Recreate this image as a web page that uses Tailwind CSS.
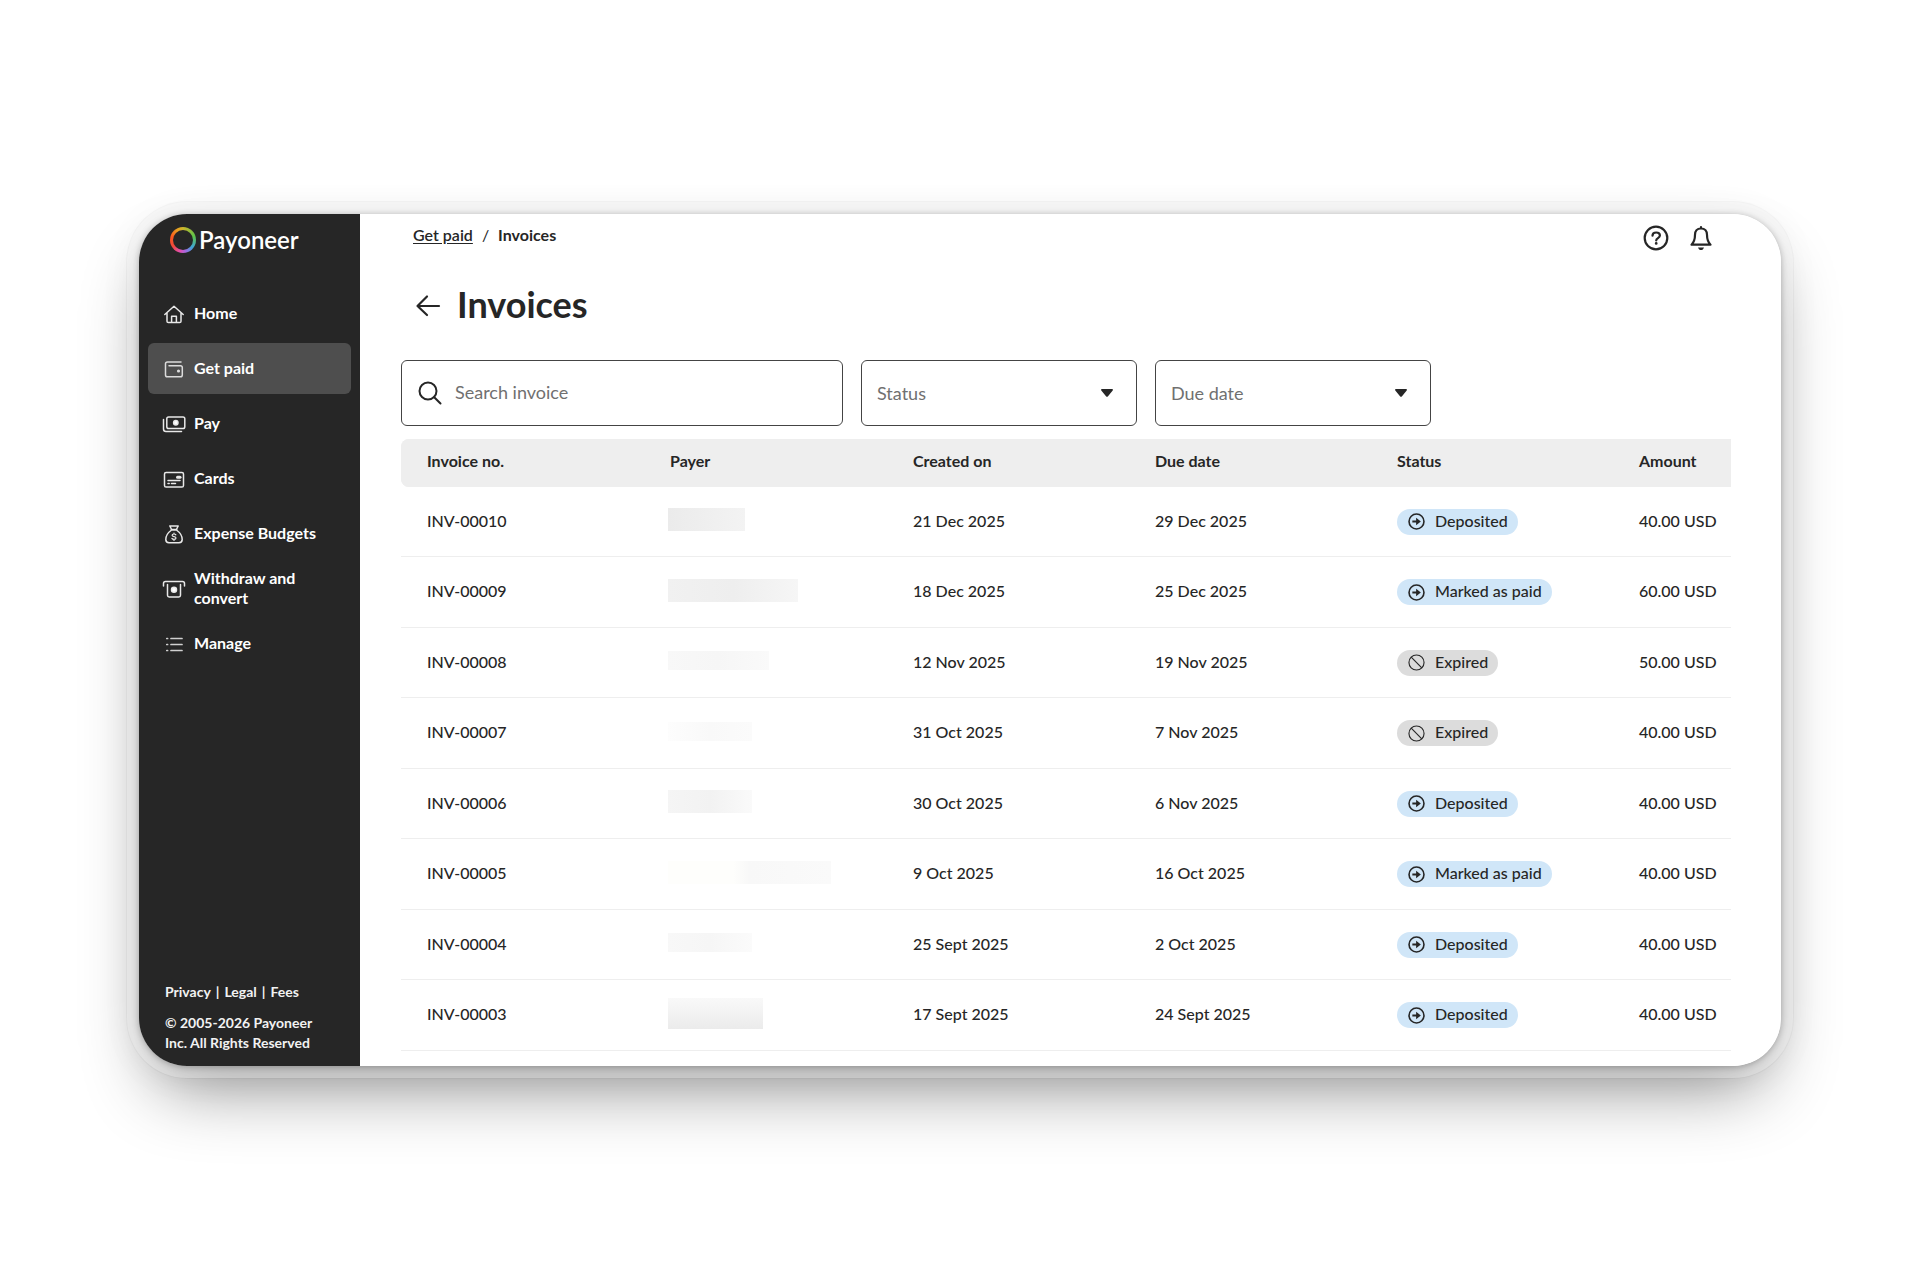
<!DOCTYPE html>
<html lang="en">
<head>
    <meta charset="UTF-8" />
    <meta name="viewport" content="width=device-width, initial-scale=1" />
    <title>Invoices - Payoneer</title>
    <script src="https://cdn.jsdelivr.net/npm/@tailwindcss/browser@4"></script>
</head>
<body class="bg-white text-[#262626] font-['Lato',sans-serif] min-h-screen flex items-center px-[139px]">

    <!-- Shared icons -->
    <svg class="hidden">
        <symbol id="icon-arrow" viewBox="0 0 18 18">
            <circle cx="9" cy="9" r="7.9" fill="none" stroke="currentColor" stroke-width="1.7" />
            <path d="M4.600 7.900h4V4.900L13.600 9l-5 4.100v-3h-4z" fill="currentColor" />
        </symbol>
        <symbol id="icon-expired" viewBox="0 0 18 18">
            <circle cx="9" cy="9" r="8" fill="none" stroke="currentColor" stroke-width="1.2" />
            <path d="M3.4 3.4l11.2 11.2" stroke="currentColor" stroke-width="1.2" />
        </symbol>
    </svg>

    <div class="w-full flex rounded-[48px] shadow-[0_0_0_12px_rgba(255,255,255,0.3),0_0_0_13px_rgba(0,0,0,0.03),0_1px_6px_rgba(0,0,0,0.4),0_4px_40px_rgba(0,0,0,0.08),0_36px_70px_-16px_rgba(0,0,0,0.45)]">

        <!-- Sidebar -->
        <aside class="w-[221px] shrink-0 bg-[#262626] text-white rounded-l-[48px] flex flex-col">
            <a href="#" class="flex items-center gap-[3px] h-7 mt-3 pl-[31px]">
                <span class="size-[26px] rounded-full p-[3px] bg-[conic-gradient(#c9b52c,#5cc34a_20%,#3fa3d8_36%,#a06ae0_46%,#e04fb4_54%,#f0483c_66%,#fa5a1e_80%,#e8a020_92%,#c9b52c)]">
                    <span class="block size-full rounded-full bg-[#262626]"></span>
                </span>
                <span class="text-2xl leading-7 font-semibold">Payoneer</span>
            </a>

            <nav class="mt-[34px] px-[9px] flex flex-col gap-1 font-bold text-base leading-5">
                <a href="#" class="h-[51px] pl-[14px] flex items-center gap-2 rounded-md">
                    <svg class="size-6 shrink-0" viewBox="0 0 24 24" fill="none" stroke="#e8e8e8" stroke-width="1.5" stroke-linecap="round" stroke-linejoin="round">
                        <path d="M2.8 12.5L12 4.2l9.2 8.3M5 11v8.2c0 .8.6 1.3 1.3 1.3h11.4c.7 0 1.3-.5 1.3-1.3V11M9.6 20.5v-6.2h4.8v6.2" />
                    </svg>
                    <span class="pb-0.5">Home</span>
                </a>
                <a href="#" class="h-[51px] pl-[14px] flex items-center gap-2 rounded-md bg-[#4e4e4e]">
                    <svg class="size-6 shrink-0" viewBox="0 0 24 24" fill="none" stroke="#dcdcdc" stroke-width="1.5" stroke-linecap="round" stroke-linejoin="round">
                        <path d="M19 5H5.500C4.300 5 3.500 5.800 3.500 6.800V18c0 1 .8 1.800 1.800 1.800h13.200c1 0 1.800-.8 1.800-1.800v-7.500c0-1-.8-1.800-1.800-1.800H7" />
                        <circle cx="16.500" cy="14" r=".8" fill="#dcdcdc" />
                    </svg>
                    <span class="pb-0.5">Get paid</span>
                </a>
                <a href="#" class="h-[51px] pl-[14px] flex items-center gap-2 rounded-md">
                    <svg class="size-6 shrink-0" viewBox="0 0 24 24" fill="none" stroke="#e8e8e8" stroke-width="1.5" stroke-linecap="round" stroke-linejoin="round">
                        <rect x="4.800" y="5" width="18" height="11.500" rx="1.800" />
                        <path d="M1.500 7.500v9.500c0 1.500 1 2.500 2.500 2.500h15.500" />
                        <circle cx="13.800" cy="10.800" r="2.200" fill="#fff" />
                    </svg>
                    <span class="pb-0.5">Pay</span>
                </a>
                <a href="#" class="h-[51px] pl-[14px] flex items-center gap-2 rounded-md">
                    <svg class="size-6 shrink-0" viewBox="0 0 24 24" fill="none" stroke="#e8e8e8" stroke-width="1.5" stroke-linecap="round" stroke-linejoin="round">
                        <rect x="2.500" y="5.500" width="19" height="14.500" rx="1.600" />
                        <path d="M6 13.500h12M6 16.500h1.200M9.500 16.500h4" />
                        <path d="M15.500 10.300h2.500" stroke-width="3" />
                    </svg>
                    <span class="pb-0.5">Cards</span>
                </a>
                <a href="#" class="h-[51px] pl-[14px] flex items-center gap-2 rounded-md">
                    <svg class="size-6 shrink-0" viewBox="0 0 24 24" fill="none" stroke="#e8e8e8" stroke-width="1.500" stroke-linecap="round" stroke-linejoin="round">
                        <path d="M9.600 7.500L7.800 4h8.400l-1.800 3.500zM9 8h6M9.600 8C6.500 10.200 3.800 14 3.800 17.500c0 2 1.200 3.200 3.200 3.200h10c2 0 3.200-1.200 3.200-3.200 0-3.500-2.700-7.300-5.800-9.500" />
                        <path d="M13.900 12.800c-.4-.6-1-.8-1.900-.8-1.100 0-1.900.5-1.900 1.300 0 1.900 3.900.8 3.900 2.700 0 .9-.9 1.400-2 1.400-.9 0-1.700-.3-2.100-1M12 11v1M12 17.400v1" stroke-width="1.200" />
                    </svg>
                    <span class="pb-0.5">Expense Budgets</span>
                </a>
                <a href="#" class="h-[51px] pl-[14px] flex items-center gap-2 rounded-md">
                    <svg class="size-6 shrink-0" viewBox="0 0 24 24" fill="none" stroke="#e8e8e8" stroke-width="1.500" stroke-linecap="round" stroke-linejoin="round">
                        <path d="M1.500 9V6.500c0-1.200.7-2 2-2h17c1.300 0 2 .8 2 2V9" />
                        <path d="M5.500 7.500v10.800c0 1 .7 1.700 1.700 1.700h9.600c1 0 1.700-.7 1.700-1.700V7.500" />
                        <circle cx="12" cy="12.800" r="2.500" fill="#fff" />
                    </svg>
                    <span class="w-[110px] pb-0.5">Withdraw and convert</span>
                </a>
                <a href="#" class="h-[51px] pl-[14px] flex items-center gap-2 rounded-md">
                    <svg class="size-6 shrink-0" viewBox="0 0 24 24" fill="none" stroke="#d0d0d0" stroke-width="1.700" stroke-linecap="round">
                        <path d="M9 6.500h11M9 12.500h11M9 18.500h11M4.800 6.500h.8M4.800 12.500h.8M4.800 18.500h.8" />
                    </svg>
                    <span class="pb-0.5">Manage</span>
                </a>
            </nav>

            <footer class="mt-auto pl-[26px] pb-[13px] text-sm leading-5 font-bold text-[#f2f2f2]">
                <p class="flex gap-[5px]">
                    <a href="#">Privacy</a><span>|</span><a href="#">Legal</a><span>|</span><a href="#">Fees</a>
                </p>
                <p class="mt-[11px] w-[160px]">© 2005-2026 Payoneer Inc. All Rights Reserved</p>
            </footer>
        </aside>

        <!-- Content -->
        <main class="grow bg-white rounded-r-[48px] pl-[41px] pr-[50px] pb-[15px]">
            <header class="h-12 flex items-center justify-between pl-3 pr-4">
                <div class="flex gap-[9px] pb-1.5 text-base leading-5">
                    <a href="#" class="underline underline-offset-2 font-semibold">Get paid</a>
                    <span>/</span>
                    <span class="font-bold">Invoices</span>
                </div>
                <div class="flex gap-[17px]">
                    <button type="button" aria-label="Help">
                        <svg class="size-7" viewBox="0 0 28 28" fill="none" stroke="#262626" stroke-width="2.200" stroke-linecap="round">
                            <circle cx="14" cy="14" r="11.300" />
                            <path d="M10.500 11.700c0-1.900 1.500-3.200 3.700-3.200 2.100 0 3.700 1.200 3.700 3 0 2.500-3.700 2.600-3.700 4.900" />
                            <circle cx="14.200" cy="19.400" r=".7" fill="#262626" stroke-width="1.400" />
                        </svg>
                    </button>
                    <button type="button" aria-label="Notifications">
                        <svg class="size-7" viewBox="0 0 28 28" fill="none" stroke="#262626" stroke-width="2.200" stroke-linejoin="round" stroke-linecap="round">
                            <path d="M14 4.500c-4 0-6 2.800-6 6.300 0 4.700-1.200 7.600-3.500 9.900h19c-2.300-2.300-3.500-5.200-3.500-9.900 0-3.500-2-6.300-6-6.300zM14 3v1" />
                            <path d="M11 23.500h6c-.5 1.700-1.700 2.600-3 2.600s-2.500-.9-3-2.600z" fill="#262626" stroke="none" />
                        </svg>
                    </button>
                </div>
            </header>

            <div class="mt-5 h-11 pl-[14px] flex items-center gap-4">
                <a href="#" aria-label="Back">
                    <svg class="size-[26px]" viewBox="0 0 26 26" fill="none" stroke="#262626" stroke-width="2.200" stroke-linecap="round" stroke-linejoin="round">
                        <path d="M24 15H2.500M12 5.500L2.500 15l9.500 9" />
                    </svg>
                </a>
                <h1 class="text-4xl leading-10 font-bold">Invoices</h1>
            </div>

            <!-- Filters -->
            <form class="mt-[34px] flex gap-[18px]">
                <div class="w-[442px] h-[66px] flex items-center gap-[13px] px-4 border border-[#444] rounded-md">
                    <svg class="size-6 shrink-0" viewBox="0 0 24 24" fill="none" stroke="#262626" stroke-width="2" stroke-linecap="round">
                        <circle cx="10" cy="10" r="8.500" />
                        <path d="M16.200 16.200l6.300 6.300" />
                    </svg>
                    <input type="search" aria-label="Search invoice" placeholder="Search invoice" class="grow min-w-0 pb-0.5 text-lg outline-none placeholder:text-[#707070]">
                </div>
                <div class="relative w-[276px] h-[66px] border border-[#444] rounded-md">
                    <select aria-label="Status" class="appearance-none size-full px-[15px] text-lg text-[#707070] outline-none">
                        <option>Status</option>
                        <option>Deposited</option>
                        <option>Marked as paid</option>
                        <option>Expired</option>
                    </select>
                    <svg class="absolute right-[23px] top-7 w-3 h-2 pointer-events-none" viewBox="0 0 12 8" fill="#262626"><path d="M1 0h10c.9 0 1.300.9.700 1.500L7 7.200c-.6.700-1.400.7-2 0L.3 1.500C-.3.900.1 0 1 0z" /></svg>
                </div>
                <div class="relative w-[276px] h-[66px] border border-[#444] rounded-md">
                    <select aria-label="Due date" class="appearance-none size-full px-[15px] text-lg text-[#707070] outline-none">
                        <option>Due date</option>
                        <option>Last 30 days</option>
                        <option>Last 90 days</option>
                    </select>
                    <svg class="absolute right-[23px] top-7 w-3 h-2 pointer-events-none" viewBox="0 0 12 8" fill="#262626"><path d="M1 0h10c.9 0 1.300.9.700 1.500L7 7.200c-.6.700-1.400.7-2 0L.3 1.500C-.3.900.1 0 1 0z" /></svg>
                </div>
            </form>

            <!-- Invoice table -->
            <table class="mt-[13px] w-full table-fixed border-separate border-spacing-0 text-base leading-5 text-left whitespace-nowrap">
                <thead>
                    <tr class="h-12 bg-[#eee]">
                        <th class="w-[243px] pl-[26px] pb-1 font-bold rounded-l-lg bg-[#eee]">Invoice no.</th>
                        <th class="w-[243px] pl-[26px] pb-1 font-bold">Payer</th>
                        <th class="w-[242px] pl-[26px] pb-1 font-bold">Created on</th>
                        <th class="w-[242px] pl-[26px] pb-1 font-bold">Due date</th>
                        <th class="w-[242px] pl-[26px] pb-1 font-bold">Status</th>
                        <th class="pl-[26px] pb-1 font-bold">Amount</th>
                    </tr>
                </thead>
                <tbody id="invoice-rows" class="font-medium"></tbody>
            </table>
        </main>
    </div>

    <script>
        // payer is hidden, only the shape of the blurred block is kept
        const invoices = [
            { no: "INV-00010", payer: "w-[77px] h-[23px] from-[#ebebeb] to-[#f3f3f3]", created: "21 Dec 2025", due: "29 Dec 2025", status: "Deposited", amount: "40.00 USD" },
            { no: "INV-00009", payer: "w-[130px] h-[23px] from-[#f1f1f1] via-[#eeeeee] to-[#f6f6f6]", created: "18 Dec 2025", due: "25 Dec 2025", status: "Marked as paid", amount: "60.00 USD" },
            { no: "INV-00008", payer: "w-[101px] h-[19px] from-[#f8f8f8] via-[#f6f6f6] to-[#fafafa]", created: "12 Nov 2025", due: "19 Nov 2025", status: "Expired", amount: "50.00 USD" },
            { no: "INV-00007", payer: "w-[84px] h-[19px] from-[#fdfdfd] via-[#f9f9f9] to-[#fbfbfb]", created: "31 Oct 2025", due: "7 Nov 2025", status: "Expired", amount: "40.00 USD" },
            { no: "INV-00006", payer: "w-[84px] h-[23px] from-[#f5f5f5] via-[#f2f2f2] to-[#fafafa]", created: "30 Oct 2025", due: "6 Nov 2025", status: "Deposited", amount: "40.00 USD" },
            { no: "INV-00005", payer: "w-[163px] h-[23px] from-[#fefefc] from-40% via-[#f8f8f8] via-50% to-[#fafafa]", created: "9 Oct 2025", due: "16 Oct 2025", status: "Marked as paid", amount: "40.00 USD" },
            { no: "INV-00004", payer: "w-[84px] h-[19px] from-[#f8f8f8] via-[#f6f6f6] to-[#fbfbfb]", created: "25 Sept 2025", due: "2 Oct 2025", status: "Deposited", amount: "40.00 USD" },
            { no: "INV-00003", payer: "w-[95px] h-[31px] bg-linear-to-b from-[#f9f9f9] to-[#ebebeb]", created: "17 Sept 2025", due: "24 Sept 2025", status: "Deposited", amount: "40.00 USD" }
        ];

        function statusPill(status) {
            const expired = status === "Expired";
            const color = expired ? "bg-[#dcdcdc]" : "bg-[#d0e6f8]";
            const icon = expired ? "icon-expired" : "icon-arrow";
            return `<span class="inline-flex items-center gap-2.5 h-[26px] pl-[11px] pr-2.5 rounded-full align-middle ${color}">
                        <svg class="size-[17px]"><use href="#${icon}" /></svg><span class="pb-0.5">${status}</span>
                    </span>`;
        }

        document.getElementById("invoice-rows").innerHTML = invoices.map(inv => {
            const direction = inv.payer.includes("bg-linear-to-b") ? "" : "bg-linear-to-r";
            return `
            <tr class="odd:h-[70px] even:h-[71px]">
                <td class="pl-[26px] pb-0.5 border-b border-[#eee]">${inv.no}</td>
                <td class="pl-6 pb-1 border-b border-[#eee]"><div class="${direction} ${inv.payer}"></div></td>
                <td class="pl-[26px] pb-0.5 border-b border-[#eee]">${inv.created}</td>
                <td class="pl-[26px] pb-0.5 border-b border-[#eee]">${inv.due}</td>
                <td class="pl-[26px] border-b border-[#eee]">${statusPill(inv.status)}</td>
                <td class="pl-[26px] pb-0.5 border-b border-[#eee]">${inv.amount}</td>
            </tr>`;
        }).join("");
    </script>
</body>
</html>
